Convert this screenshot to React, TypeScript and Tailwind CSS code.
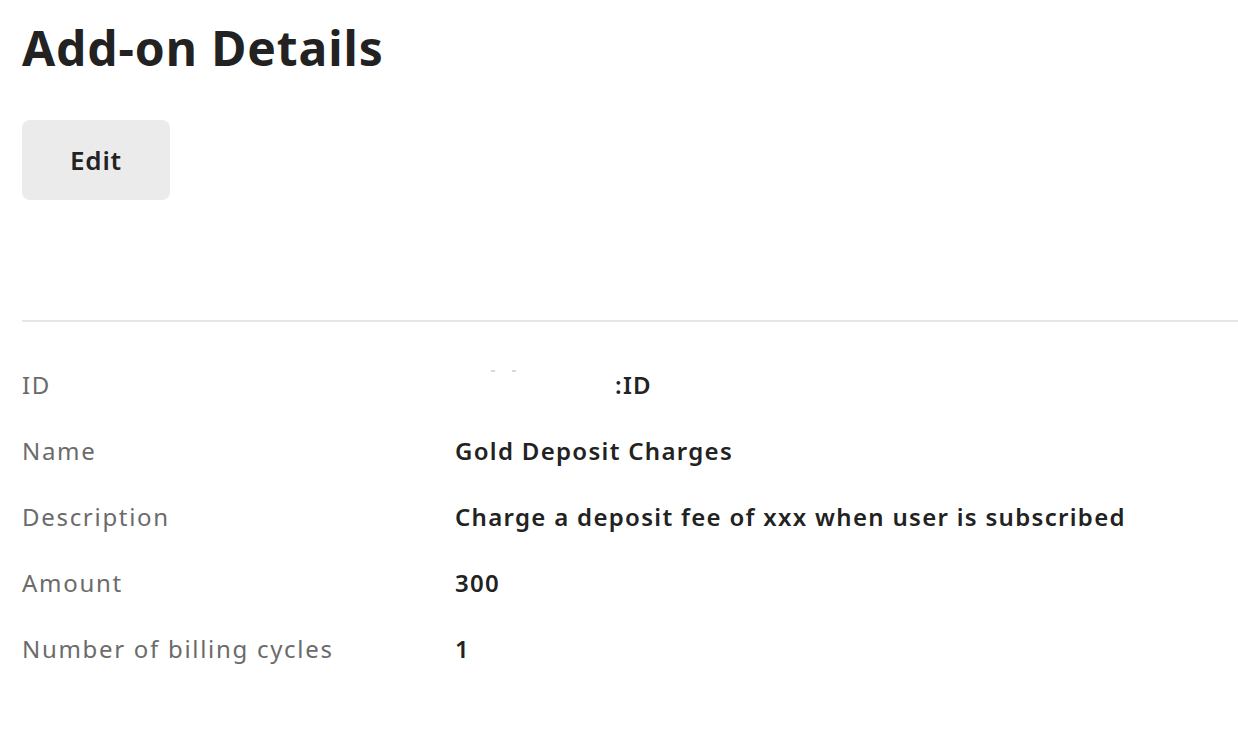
import React from "react";

const rows: { label: string; value: React.ReactNode }[] = [
  {
    label: "ID",
    value: (
      <span className="relative inline-block pl-[160px]">
        <span className="absolute left-[36px] top-[3px] h-[2px] w-[4px] bg-[#d8d8d8]" />
        <span className="absolute left-[57px] top-[3px] h-[2px] w-[4px] bg-[#d8d8d8]" />
        :ID
      </span>
    ),
  },
  { label: "Name", value: "Gold Deposit Charges" },
  { label: "Description", value: "Charge a deposit fee of xxx when user is subscribed" },
  { label: "Amount", value: "300" },
  { label: "Number of billing cycles", value: "1" },
];

export default function App() {
  return (
    <div
      className="min-h-[730px] w-full bg-white pl-[22px] text-[#222222]"
      style={{ fontFamily: "'Noto Sans', sans-serif" }}
    >
      <h1 className="pt-[18px] text-[48px] font-bold leading-[60px] tracking-[0.9px] text-[#222222]">
        Add-on Details
      </h1>
      <button className="mt-[42px] flex h-[80px] w-[148px] items-center justify-center rounded-[8px] bg-[#ebebeb] text-[26px] font-semibold tracking-[0.8px] text-[#222222]">
        Edit
      </button>
      <div className="mt-[120px] h-[2px] bg-[#e6e6e6]" />
      <div className="pt-[30px]">
        {rows.map((r) => (
          <div key={r.label} className="flex h-[66px] items-center">
            <div className="w-[433px] text-[24px] tracking-[1.7px] text-[#6b6b6b]">{r.label}</div>
            <div className="text-[24px] font-semibold tracking-[1.3px] text-[#222222]">{r.value}</div>
          </div>
        ))}
      </div>
    </div>
  );
}
